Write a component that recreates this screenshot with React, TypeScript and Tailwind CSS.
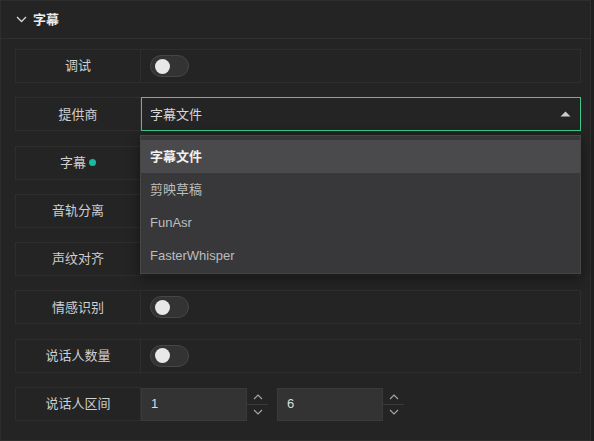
import { useState } from "react";

const font = {
  fontFamily: '"Liberation Sans", "Noto Sans CJK SC", sans-serif',
};

function Toggle() {
  return (
    <div className="flex h-[22px] w-[39px] items-center rounded-full border border-[#464646] bg-[#333333] pl-[4px]">
      <div className="h-[15px] w-[15px] rounded-full bg-[#e8e8e8]" />
    </div>
  );
}

function Label({ text, dot }: { text: string; dot?: boolean }) {
  return (
    <div className="flex h-full w-[125px] shrink-0 items-center justify-center gap-[3px] border-r border-[#2e2e2e] text-[13px] text-[#cfcfcf]">
      {text}
      {dot && <span className="h-[7px] w-[7px] rounded-full bg-[#1bb8a2]" />}
    </div>
  );
}

function Row({
  label,
  dot,
  children,
}: {
  label: string;
  dot?: boolean;
  children?: React.ReactNode;
}) {
  return (
    <div className="flex h-[34px] w-[566px] items-center border border-[#2e2e2e]">
      <Label text={label} dot={dot} />
      <div className="flex h-full flex-1 items-center pl-[9px]">{children}</div>
    </div>
  );
}

function Chevron({ up }: { up?: boolean }) {
  return (
    <svg width="10" height="6" viewBox="0 0 10 6" fill="none">
      <path
        d={up ? "M1 5 L5 1 L9 5" : "M1 1 L5 5 L9 1"}
        stroke="#a8a8a8"
        strokeWidth="1.1"
      />
    </svg>
  );
}

function NumberInput({ value }: { value: string }) {
  return (
    <div className="flex h-[33px] items-center">
      <div className="flex h-full w-[106px] items-center border border-[#3a3a3a] bg-[#333333] pl-[9px] text-[13px] text-[#dddddd]">
        {value}
      </div>
      <div className="flex h-full w-[21px] flex-col items-center justify-center">
        <div className="flex h-[16px] items-center justify-center pt-[3px]">
          <Chevron up />
        </div>
        <div className="h-px w-full bg-[#3a3a3a]" />
        <div className="flex h-[16px] items-center justify-center pb-[1px]">
          <Chevron />
        </div>
      </div>
    </div>
  );
}

const options = ["字幕文件", "剪映草稿", "FunAsr", "FasterWhisper"];

export default function App() {
  const [selected] = useState(0);

  return (
    <div className="h-[441px] w-[594px] bg-[#1f1f1f]" style={font}>
      <div className="h-[441px] w-[591px] border border-[#2e2e2e] bg-[#242424]">
        <div className="flex h-[38px] items-center gap-[6px] border-b border-[#2f2f2f] pl-[15px]">
          <svg width="11" height="7" viewBox="0 0 11 7" fill="none">
            <path d="M1 1 L5.5 5.5 L10 1" stroke="#d8d8d8" strokeWidth="1.3" />
          </svg>
          <span className="text-[13px] font-semibold text-[#ececec]">字幕</span>
        </div>

        <div className="relative flex flex-col gap-[14.3px] pl-[14px] pt-[10px]">
          <Row label="调试">
            <Toggle />
          </Row>

          <div className="flex h-[34px] w-[566px] items-center">
            <div className="flex h-full items-center border-y border-l border-[#2e2e2e]">
              <Label text="提供商" />
            </div>
            <div className="flex h-[34px] w-[440px] items-center justify-between border border-[#3ecb8a] bg-[#242424] pl-[8px] pr-[9px] text-[13px] text-[#d6d6d6]">
              字幕文件
              <svg width="11" height="6" viewBox="0 0 11 6">
                <path d="M0.5 5.5 L5.5 0.5 L10.5 5.5 Z" fill="#cccccc" />
              </svg>
            </div>
          </div>

          <Row label="字幕" dot />
          <Row label="音轨分离" />
          <Row label="声纹对齐" />
          <Row label="情感识别">
            <Toggle />
          </Row>
          <Row label="说话人数量">
            <Toggle />
          </Row>

          <div className="flex h-[34px] w-[566px] items-center">
            <div className="flex h-full items-center border-y border-l border-[#2e2e2e]">
              <Label text="说话人区间" />
            </div>
            <NumberInput value="1" />
            <div className="w-[9px]" />
            <NumberInput value="6" />
          </div>

          <div className="absolute left-[139px] top-[96px] w-[441px] border border-[#474747] bg-[#38383a] pb-[1px] pt-[4px] shadow-[0_4px_12px_rgba(0,0,0,0.45)]">
            {options.map((o, i) => (
              <div
                key={o}
                className={`flex h-[33px] items-center pl-[9px] text-[13px] ${
                  i === selected
                    ? "bg-[#4a4a4c] font-bold text-[#f2f2f2]"
                    : "text-[#bdbdbd]"
                }`}
              >
                {o}
              </div>
            ))}
          </div>
        </div>
      </div>
    </div>
  );
}
